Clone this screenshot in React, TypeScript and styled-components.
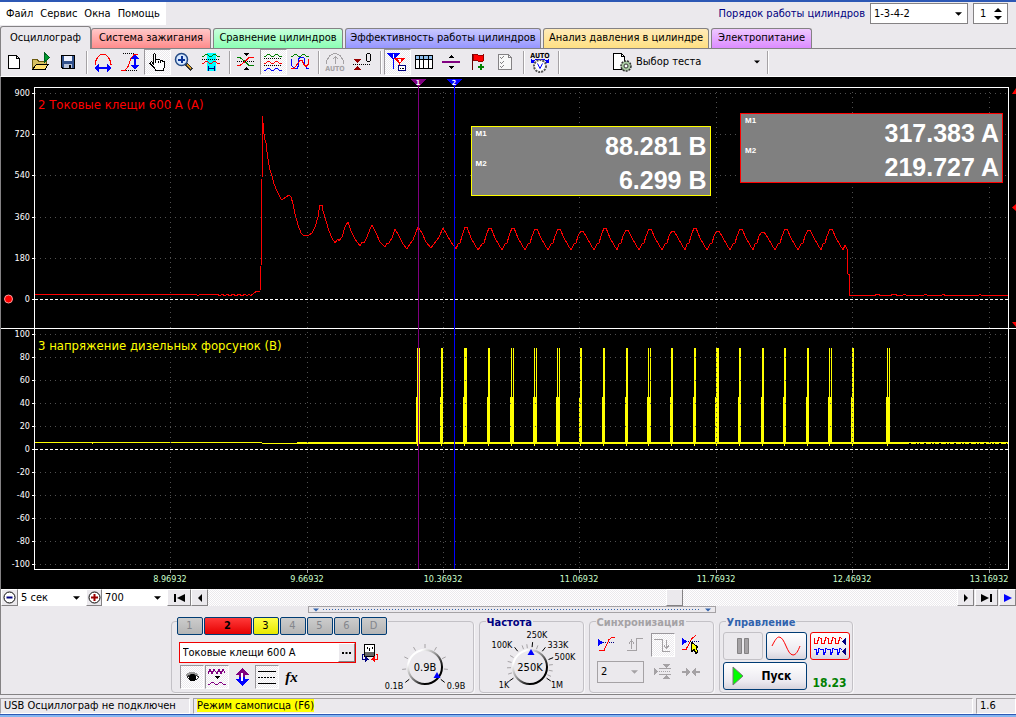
import React from "react";
import styled, { createGlobalStyle, css } from "styled-components";

const FACE = "#ebe9ed";
const LINE = "#848284";
const CHECKER = "repeating-conic-gradient(#ebe9ed 0% 25%, #ffffff 0% 50%) 0 0 / 2px 2px";

const GlobalStyle = createGlobalStyle`
  * { box-sizing: border-box; }
  body {
    margin: 0;
    background: ${FACE};
    font-family: "DejaVu Sans Condensed", "DejaVu Sans", sans-serif;
    font-size: 11px;
    line-height: 14px;
    color: #000;
  }
  button, input, select { font: inherit; color: inherit; border-radius: 0; }
  button { background: none; border: 0; padding: 0; margin: 0; }
`;

/* ---------- window frame ---------- */

const Window = styled.div`
  display: flex;
  flex-direction: column;
  border-top: 2px solid #2d58b5;
`;

const Header = styled.header`
  display: flex;
  justify-content: space-between;
  align-items: flex-start;
  height: 24px;
`;

const MenuBar = styled.nav`
  display: flex;
  align-items: center;
  gap: 7px;
  height: 23px;
  padding: 0 6px;
  background: #fff;
`;

const OrderBar = styled.div`
  display: flex;
  align-items: center;
  gap: 5px;
  padding: 1px 8px 0 0;
`;

const OrderLabel = styled.label`
  color: #000080;
`;

const SelectWrap = styled.span<{ $w: number }>`
  position: relative;
  display: block;
  width: ${(p) => p.$w}px;
  svg {
    position: absolute;
    right: 6px;
    top: 50%;
    margin-top: -2px;
    pointer-events: none;
  }
`;

const Select = styled.select<{ $h: number; $plain?: boolean; $off?: boolean }>`
  appearance: none;
  display: block;
  width: 100%;
  height: ${(p) => p.$h}px;
  padding: 0 0 0 3px;
  background: ${(p) => (p.$off ? FACE : "#fff")};
  border: ${(p) => (p.$plain ? "0" : p.$off ? "1px solid #a5a2a5" : "1px solid " + LINE)};
  opacity: 1;
  color: #000;
`;

const SpinBox = styled.span`
  display: flex;
  align-items: center;
  width: 35px;
  height: 21px;
  background: #fff;
  border: 1px solid ${LINE};
  input {
    width: 20px;
    padding: 0 0 0 6px;
    border: 0;
    background: transparent;
  }
`;

/* ---------- tabs ---------- */

const Tabs = styled.div`
  display: flex;
  align-items: flex-end;
  height: 23px;
  border-bottom: 1px solid ${LINE};
`;

const Tab = styled.button<{ $w: number; $from?: string; $to?: string }>`
  width: ${(p) => p.$w}px;
  height: ${(p) => (p.$from ? 20 : 22)}px;
  margin-right: ${(p) => (p.$from ? 2 : 0)}px;
  padding-bottom: 1px;
  border: 1px solid ${LINE};
  border-bottom: 0;
  border-radius: 3px 3px 0 0;
  white-space: nowrap;
  background: ${(p) => (p.$from ? `linear-gradient(${p.$from}, ${p.$to})` : FACE)};
  ${(p) =>
    !p.$from &&
    css`
      height: 23px;
      margin-bottom: -1px;
      position: relative;
    `}
`;

/* ---------- toolbar ---------- */

const Toolbar = styled.div`
  display: flex;
  align-items: center;
  height: 28px;
  padding: 0 0 1px;
  border-bottom: 1px solid #fff;
  border-left: 1px solid ${LINE};
`;

const Tool = styled.button<{ $on?: boolean }>`
  display: flex;
  align-items: center;
  justify-content: center;
  width: 27px;
  height: 26px;
  padding-right: 1px;
  ${(p) =>
    p.$on &&
    css`
      background: ${CHECKER};
      border: 1px solid;
      border-color: #9a979c #fff #fff #9a979c;
    `}
`;

const Separator = styled.span`
  width: 2px;
  height: 23px;
  margin: 0 2px 0 4px;
  border-left: 1px solid #a5a2a5;
  border-right: 1px solid #fff;
`;

const TestPicker = styled.button`
  display: flex;
  align-items: center;
  gap: 4px;
  width: 201px;
  height: 26px;
  padding: 0 3px 0 50px;
  span { flex: 1; text-align: left; }
`;

/* ---------- chart ---------- */

const ChartArea = styled.main`
  position: relative;
  background: #000;
  border-left: 1px solid ${LINE};
  > svg { display: block; width: 100%; height: auto; }
`;

const Readout = styled.section<{ $c: string; $w: number; $top: number; $right: string }>`
  position: absolute;
  top: ${(p) => p.$top}px;
  right: ${(p) => p.$right};
  width: ${(p) => p.$w}px;
  height: 70px;
  display: flex;
  justify-content: space-between;
  padding: 2px 3px 0 4px;
  background: #808080;
  border: 1px solid ${(p) => p.$c};
  color: #fff;
  font-weight: bold;
  font-family: "Liberation Sans", Arial, sans-serif;
`;

const Marks = styled.div`
  font-size: 8px;
  line-height: 10px;
  display: flex;
  flex-direction: column;
  gap: 20px;
`;

const Values = styled.div`
  font-size: 25px;
  line-height: 34px;
  text-align: right;
`;

/* ---------- scroll row ---------- */

const ScrollRow = styled.div`
  display: flex;
  align-items: stretch;
  height: 17px;
  border-left: 1px solid ${LINE};
`;

const Raised = styled.button<{ $w: number }>`
  display: flex;
  align-items: center;
  justify-content: center;
  flex: none;
  width: ${(p) => p.$w}px;
  background: ${FACE};
  border: 1px solid;
  border-color: #fff ${LINE} ${LINE} #fff;
`;

const Track = styled.div`
  flex: 1;
  display: flex;
  justify-content: flex-end;
  padding-right: 27%;
  background: ${CHECKER};
`;

const Gap = styled.span`
  width: 1px;
`;

const SplitterRow = styled.div`
  display: flex;
  justify-content: center;
  padding-left: 6px;
  height: 6px;
  border-left: 1px solid ${LINE};
`;

const Splitter = styled.button`
  display: flex;
  align-items: center;
  justify-content: space-between;
  width: 408px;
  height: 7px;
  padding: 0 4px;
  border: 1px solid #a5a2a5;
  i {
    flex: 1;
    height: 1px;
    margin: 0 4px;
    background: repeating-linear-gradient(90deg, #3163ad 0 1px, transparent 1px 3px);
  }
`;

/* ---------- control panel ---------- */

const Panel = styled.section`
  display: flex;
  justify-content: center;
  gap: 5px;
  height: 82px;
  padding: 5px 0 0 6px;
  border-left: 1px solid ${LINE};
`;

const groupFrame = css`
  border: 1px solid #c3c1c6;
  border-radius: 4px;
  box-shadow: 1px 1px 0 #f7f6f8;
`;

const ChannelGroup = styled.section`
  display: flex;
  width: 303px;
  height: 72px;
  margin-top: 4px;
  ${groupFrame}
`;

const ChannelSide = styled.div`
  width: 216px;
  margin-top: -5px;
  padding-left: 5px;
`;

const Channels = styled.div`
  display: flex;
  gap: 1px;
  background: ${FACE};
`;

const Channel = styled.button<{ $tone?: "red" | "yellow" }>`
  width: ${(p) => (p.$tone === "red" ? 48 : 26)}px;
  height: 18px;
  border: 1px solid #003c74;
  border-radius: 2px;
  color: ${(p) => (p.$tone ? "#000" : "#84868c")};
  font-weight: ${(p) => (p.$tone === "red" ? "bold" : "normal")};
  background: ${(p) =>
    p.$tone === "red"
      ? "linear-gradient(#ff3a3a, #e60000)"
      : p.$tone === "yellow"
        ? "linear-gradient(#ffff4a, #e8e800)"
        : "linear-gradient(#cccccc, #b4b4b4)"};
`;

const FieldRow = styled.div`
  display: flex;
  align-items: center;
  gap: 5px;
  padding: 7px 0 2px 2px;
`;

const Field = styled.div`
  display: flex;
  width: 177px;
  height: 21px;
  background: #fff;
  border: 1px solid #f00000;
  input {
    flex: 1;
    min-width: 0;
    padding: 0 0 0 3px;
    border: 0;
    background: transparent;
  }
`;

const Icons = styled.div`
  display: flex;
  gap: 1px;
  padding-left: 3px;
`;

const SmallTool = styled.button<{ $on?: boolean }>`
  display: flex;
  align-items: center;
  justify-content: center;
  width: 24px;
  height: 24px;
  border: 1px solid transparent;
  ${(p) =>
    p.$on &&
    css`
      background: ${CHECKER};
      border-color: #9a979c #fff #fff #9a979c;
    `}
`;

const Formula = styled.em`
  font-family: "Liberation Serif", serif;
  font-size: 15px;
  font-weight: bold;
`;

const Group = styled.fieldset<{ $w: number }>`
  width: ${(p) => p.$w}px;
  height: 76px;
  min-width: 0;
  margin: 0;
  padding: 0;
  ${groupFrame}
`;

const Legend = styled.legend<{ $c: string }>`
  height: 8px;
  margin-left: 6px;
  padding: 0 1px;
  line-height: 12px;
  font-weight: bold;
  color: ${(p) => p.$c};
`;

const Dial = styled.div<{ $w: number; $h: number }>`
  position: relative;
  width: ${(p) => p.$w}px;
  height: ${(p) => p.$h}px;
  svg { display: block; overflow: visible; }
  input {
    position: absolute;
    inset: 14px 24px;
    width: 48px;
    margin: 0;
    opacity: 0;
  }
`;

const SyncGrid = styled.div`
  display: grid;
  grid-template-columns: repeat(4, 28px);
  grid-template-rows: 24px 30px;
  align-items: center;
  justify-content: center;
  padding-top: 8px;
`;

const SyncSelect = styled.div`
  grid-column: span 2;
  padding-left: 2px;
`;

const RunGrid = styled.div`
  display: grid;
  grid-template-columns: 40px 41px 40px;
  grid-template-rows: 28px 28px;
  column-gap: 3px;
  row-gap: 2px;
  padding: 7px 0 0 3px;
`;

const RunButton = styled.button<{ $c: string; $wide?: boolean }>`
  display: flex;
  align-items: center;
  justify-content: center;
  border: 1px solid ${(p) => p.$c};
  border-radius: 3px;
  background: linear-gradient(#ffffff, #eceaf0 70%, #d6d3dc);
  font-weight: bold;
  font-size: 12px;
  ${(p) =>
    p.$wide &&
    css`
      grid-column: span 2;
      justify-content: flex-start;
      gap: 18px;
      padding-left: 8px;
    `}
  &:disabled { background: ${FACE}; }
`;

const Voltage = styled.output`
  align-self: end;
  justify-self: center;
  color: #008000;
  font-size: 12px;
  line-height: 14px;
  font-weight: bold;
`;

/* ---------- status bar ---------- */

const StatusBar = styled.footer`
  display: flex;
  gap: 3px;
  height: 20px;
  padding: 3px 0 0;
  border-top: 1px solid ${LINE};
`;

const DesktopEdge = styled.div`
  height: 3px;
  border-top: 1px solid #2d58b5;
  background: #84b6f0;
`;

const StatusCell = styled.div<{ $w?: number }>`
  flex: ${(p) => (p.$w ? "none" : "1")};
  width: ${(p) => (p.$w ? p.$w + "px" : "auto")};
  padding-left: 3px;
  border: 1px solid;
  border-color: #a5a2a5 #fff #fff #a5a2a5;
  white-space: nowrap;
  mark { background: #ffff00; color: #000; }
`;

/* ---------- small drawings ---------- */

const Down = ({ c = "#000", w = 7 }: { c?: string; w?: number }) => (
  <svg width={w} height="4" viewBox="0 0 8 4"><path d="M0 0h8L4 4z" fill={c} /></svg>
);

type IconProps = { children: React.ReactNode; w?: number; h?: number };
const Ico = ({ children, w = 20, h = 20 }: IconProps) => (
  <svg width={w} height={h} viewBox={`0 0 ${w} ${h}`} fill="none" stroke="#000" shapeRendering="crispEdges">{children}</svg>
);

/* A two-crest pixel wave whose troughs lie on row y. */
const Wave = ({ y, c }: { y: number; c: string }) => (
  <path
    d={`M1 ${y}.500h2M8 ${y}.500h3M16 ${y}.500h3M3 ${y - 1}.500h1M7 ${y - 1}.500h1M11 ${y - 1}.500h1M15 ${y - 1}.500h1M4 ${y - 2}.500h3M12 ${y - 2}.500h3`}
    stroke={c}
  />
);

const NewIcon = () => (
  <Ico><path d="M4.500 3.500h8l3 3v10h-11zM12.500 3.500v3h3" fill="#fff" /></Ico>
);
const OpenIcon = () => (
  <Ico>
    <path d="M1.500 17.500v-10h5l1 2h8v3" fill="#d8c060" stroke="#6b5a10" />
    <path d="M1.500 17.500l4-5.500h12l-3.500 5.500z" fill="#ffe070" stroke="#000" />
    <path d="M13.500 1v9l5-4.500z" fill="#009a30" stroke="#006020" />
  </Ico>
);
const SaveIcon = () => (
  <Ico>
    <path d="M3.500 3.500h13v13h-11.500l-1.500-1.500z" fill="#31518c" />
    <path d="M6 4h8v5H6z" fill="#eef2ff" stroke="none" />
    <path d="M6 12h8v4H6z" fill="#b8c4dc" stroke="none" /><path d="M11 12.500h2v3h-2z" fill="#000" stroke="none" />
  </Ico>
);
const PeriodIcon = () => (
  <Ico>
    <path d="M1.500 12.500h1v-3l2-4 3-3h5l3 3 2 4v3h1" stroke="#f00" />
    <path d="M3 16h14" stroke="#00f" strokeWidth="2" />
    <path d="M1 16l5-4v8zM19 16l-5-4v8z" fill="#00f" stroke="none" />
  </Ico>
);
const SwingIcon = () => (
  <Ico>
    <path d="M1 18.500h4l3-4 3-8 3-4h4" stroke="#f00" />
    <path d="M3 1.500h12M6 18.500h12" strokeDasharray="1 1" />
    <path d="M15 4v12" stroke="#00f" strokeWidth="2" />
    <path d="M15 2l-4 5h8zM15 18l-4-5h8z" fill="#00f" stroke="none" />
  </Ico>
);
const HandIcon = () => (
  <Ico>
    <path d="M6.500 13V2.500q1.500-1.500 2 0v5q2-1 2.500 .5q2-1 2.500 .5q2-.5 2.500 1q1.500 0 1.500 1.500v4l-1.500 3.500h-7l-2-3-4-4q0-2 2-1.500z" fill="#fff" />
    <path d="M8.500 8v3M11.500 8.500V11M13.500 9v2" />
  </Ico>
);
const ZoomIcon = () => (
  <Ico>
    <path d="M12 12l6 6" stroke="#333" strokeWidth="4" /><path d="M13 12.500l4 4" stroke="#e0a020" strokeWidth="2" />
    <circle cx="7.500" cy="7.500" r="6" fill="#d6e8ff" stroke="#244a84" strokeWidth="1.500" shapeRendering="auto" />
    <path d="M7 4h2v7H7zM4 7h7v2H4z" fill="#0a3296" stroke="none" />
  </Ico>
);
const BandIcon = () => (
  <Ico>
    <path d="M6 1h9v18H6z" fill="#0ff" stroke="none" />
    <Wave y={4} c="#008000" />
    <path d="M1 7.500h18" strokeDasharray="1 1" />
    <Wave y={11} c="#f00" />
    <path d="M7 16.500h7M7.500 14v5M13.500 14v5" stroke="#000080" />
  </Ico>
);
const CrossIcon = () => (
  <Ico>
    <path d="M1 5.500h3l4 3 5 5h5" stroke="#008000" /><path d="M1 13.500h3l4-3 5-5h5" stroke="#f00" />
    <path d="M1 9.500h18" strokeDasharray="1 1" />
    <path d="M7 1h6l-3 3zM7 18h6l-3-3z" fill="#000" stroke="none" />
  </Ico>
);
const StackIcon = () => (
  <Ico>
    <Wave y={4} c="#008000" />
    <Wave y={11} c="#f00" />
    <Wave y={18} c="#00f" />
    <path d="M1 6.500h18M1 13.500h18" strokeDasharray="1 1" />
  </Ico>
);
const OverlayIcon = () => (
  <Ico>
    <Wave y={4} c="#008000" />
    <path d="M1.500 7v6l2 3h4l1-3v-6l2-2h3l1 2v6l2 3h2" stroke="#00f" />
    <path d="M1 16.500h3l3-4 3-4h2l2 4 2 2 2-2V7" stroke="#f00" />
  </Ico>
);
const AutoIcon = () => (
  <Ico>
    <path d="M1.500 12v-3l3-5 4-2.500h3l4 2.500 3 5v3M10.500 12V4M7.500 7.500l3-3 3 3" stroke="#a5a2a5" />
    <text x="10" y="19" textAnchor="middle" fontSize="7" fontWeight="bold" fill="#a5a2a5" stroke="none">AUTO</text>
  </Ico>
);
const ZeroIcon = () => (
  <Ico>
    <path d="M1 12.500h18" strokeDasharray="1 1" />
    <path d="M2 7h7l-3.500 4zM2 18h7l-3.500-4z" fill="#900" stroke="none" />
    <rect x="14.500" y="1.500" width="4" height="8" rx="2" />
  </Ico>
);
const MarkersIcon = () => (
  <Ico>
    <path d="M0 1h13L7 8v9H6V8z" fill="#00f" stroke="none" />
    <path d="M7 6h11l-5 6v5h-1v-5z" fill="#f00" stroke="none" />
    <path d="M6.500 2v4M11 7.500h2v1h-1v1h2" stroke="#fff" />
    <path d="M11.500 13.500h7v5h-7z" fill="#fff" stroke="#000080" /><path d="M13 16.500h1M15 16.500h2" />
  </Ico>
);
const TableIcon = () => (
  <Ico>
    <path d="M1.500 3.500h17v13h-17z" fill="#fff" /><path d="M2 4h16v3H2z" fill="#8fc0ee" stroke="none" />
    <path d="M1.500 7.500h17M5.500 4v13M9.500 4v13M14.500 4v13" />
  </Ico>
);
const SplitIcon = () => (
  <Ico>
    <path d="M1 10h18" stroke="#800080" strokeWidth="2" />
    <path d="M7 6h6l-3-3zM7 14h6l-3 3z" fill="#000" stroke="none" />
  </Ico>
);
const FlagIcon = () => (
  <Ico>
    <path d="M4.500 2v16" stroke="#600" />
    <path d="M5 3q3-2 5 0t5 0v6q-2 2-5 0t-5 0z" fill="#f00" stroke="#900" />
    <path d="M13 12v6M10 15h6" stroke="#008000" strokeWidth="2" />
  </Ico>
);
const ChecklistIcon = () => (
  <Ico>
    <path d="M3.500 2.500h10l3 3v12h-13z" fill="#f8f8f8" stroke="#848284" /><path d="M13.500 2.500v3h3" stroke="#848284" />
    <path d="M5.500 5.500l1 1 2-2M5.500 10.500l1 1 2-2M5.500 14.500l1 1 2-2" stroke="#848284" />
  </Ico>
);
const AutoClockIcon = () => (
  <Ico h={24}>
    <text x="10" y="8" textAnchor="middle" fontSize="7" fontWeight="bold" fill="#000" stroke="none">AUTO</text>
    <path d="M3 11q7-4 14 0" stroke="#00f" /><path d="M1 9v4h5zM19 9v4h-5z" fill="#00f" stroke="none" />
    <circle cx="10" cy="16" r="6" fill="#fff" stroke="#555" strokeWidth="2" strokeDasharray="2 1" shapeRendering="auto" />
    <path d="M7.500 13.500l2.500 5 2.500-5" stroke="#00f" shapeRendering="auto" />
  </Ico>
);
const DocGearIcon = () => (
  <Ico>
    <path d="M1.500 1.500h8l3 3v13h-11z" fill="#fff" /><path d="M9.500 1.500v3h3" />
    <circle cx="14" cy="14" r="5" fill="#a8c8a0" stroke="#333" strokeWidth="1.500" strokeDasharray="2 1" shapeRendering="auto" />
    <circle cx="14" cy="14" r="2" fill="#fff" stroke="#333" shapeRendering="auto" />
  </Ico>
);

/* ---------- chart data ---------- */

const ONSET =
  "M35 294.500H196l2 1 2-1H217l3 1 2-1 3 1 2-1 3 1 3-1 3 1 3-1 3 1 3-1 2 1 2-1 2 1L257 291 260 291 261 267 262 180 262.500 116 " +
  "263 123 264 134 265 140 266 143 267 152 268 159 270 170 272 176 274 184 277 191 281 199 283 199 286 197 289 195 291 197 " +
  "293 204 295 214 298 225 301 233 303 235 306 236 309 235 312 233 315 227 318 217 319 210 320 205 322 205 323 211 326 221 " +
  "329 231 332 238 335 243 338 239 339 241 342 237 345 227 348 222 351 231 355 239 360 246 362 242 364 243 367 237 370 229 " +
  "372 225 376 233 380 242 385 247 387 243 389 243 392 238 395 229 399 236 403 244 407 249 410 244 413 240 416 232 418 227 " +
  "422 233 426 242 431 248 434 244 439 237 443 228 447 235 451 242 456 249";
const PEAKS: [number, number][] = [
  [466, 227], [490, 228], [513, 228], [536, 229], [559, 229], [582, 231], [605, 228], [627, 230], [650, 229],
  [673, 231], [695, 228], [718, 231], [741, 229], [763, 232], [786, 229], [809, 230], [831, 229],
];
const ripple = PEAKS.map(([x, y]) =>
  `L${x - 8} 244l2-1L${x - 4} 236L${x - 1} ${y}h2L${x + 5} 238l4 7L${x + 12} 250`).join("");
const CURRENT = `${ONSET}${ripple}l2-5 2 4 1 25h1v21.500h26l1-1h3l1 1h11l1-1h4l1 1h5l2-1 4 1h15l2-1 4 1h12l2-1 3 1h32l2-1 2 1H1008`;

type Spike = { low: number; lowW: number; tops: [number, number][] };
const SPIKES: Spike[] = [
  { low: 416, lowW: 4, tops: [[417, 3]] }, { low: 440, lowW: 3, tops: [[441, 2]] },
  { low: 463, lowW: 4, tops: [[464, 3]] }, { low: 487, lowW: 3, tops: [[488, 2]] },
  { low: 510, lowW: 4, tops: [[511, 1], [513, 1]] }, { low: 533, lowW: 4, tops: [[534, 1], [536, 1]] },
  { low: 556, lowW: 4, tops: [[557, 1], [559, 1]] }, { low: 579, lowW: 3, tops: [[580, 2]] },
  { low: 602, lowW: 3, tops: [[603, 2]] }, { low: 625, lowW: 3, tops: [[626, 2]] },
  { low: 647, lowW: 4, tops: [[648, 1], [650, 1]] }, { low: 670, lowW: 3, tops: [[671, 2]] },
  { low: 693, lowW: 3, tops: [[694, 2]] }, { low: 715, lowW: 4, tops: [[716, 3]] },
  { low: 738, lowW: 3, tops: [[739, 2]] }, { low: 761, lowW: 3, tops: [[762, 2]] },
  { low: 783, lowW: 3, tops: [[784, 2]] }, { low: 806, lowW: 3, tops: [[807, 2]] },
  { low: 828, lowW: 4, tops: [[829, 1], [831, 1]] }, { low: 851, lowW: 3, tops: [[852, 2]] },
  { low: 886, lowW: 4, tops: [[887, 1], [889, 1]] },
];

const UPPER: [string, number][] = [["900", 93], ["720", 134], ["540", 175], ["360", 217], ["180", 258], ["0", 299]];
const LOWER: [string, number][] = [100, 80, 60, 40, 20, 0, -20, -40, -60, -80, -100].map(
  (v, i) => [String(v), 334 + i * 23],
);
const TIMES: [string, number][] = [
  ["8.96932", 170], ["9.66932", 307], ["10.36932", 443], ["11.06932", 579], ["11.76932", 716], ["12.46932", 852], ["13.16932", 989],
];

const Chart = () => (
  <svg viewBox="1 77 1015 512" role="img" aria-label="Осциллограмма">
    <g fill="#ff0" shapeRendering="crispEdges">
      <path d="M35 442h227v1H35zM262 443h35v1h-35zM92 443h1v1h-1zM297 442h612v2H297zM909 442h99v1h-99z" />
      {SPIKES.map((s) => (
        <g key={s.low}>
          <rect x={s.low} y={397} width={s.lowW} height={47} />
          <rect x={s.low + 1} y={444} width={1} height={2} />
          {s.tops.map(([x, w]) => <rect key={x} x={x} y={348} width={w} height={50} />)}
        </g>
      ))}
    </g>
    <path d="M890 443.500h118" stroke="#ff0" strokeDasharray="4 2 5 1 2 1" shapeRendering="crispEdges" />
    <path d={CURRENT} fill="none" stroke="#f00" shapeRendering="crispEdges" />
    <g stroke="#505050" strokeDasharray="1 4" shapeRendering="crispEdges">
      {[...UPPER, ...LOWER].filter(([t]) => t !== "0").map(([t, y]) => <path key={t} d={`M35 ${y}.500H1008`} />)}
      {TIMES.map(([t, x]) => <path key={t} d={`M${x}.500 92V569`} />)}
    </g>
    <g stroke="#fff" shapeRendering="crispEdges">
      <path d="M35 299.500H1008M35 449.500H1008" strokeDasharray="3 2" />
      <path d="M34.500 569.500V87.500H1008.500V569.500zM1 328.500H1016" fill="none" />
      {[...UPPER, ...LOWER].map(([t, y]) => <path key={t + y} d={`M32 ${y}.500h3`} />)}
    </g>
    <g stroke="#999" shapeRendering="crispEdges">
      {TIMES.map(([t, x]) => <path key={t} d={`M${x}.500 570v3`} />)}
    </g>
    <g fill="#fff" fontSize="9" textAnchor="end">
      {[...UPPER, ...LOWER].map(([t, y]) => <text key={t + y} x="30" y={y + 3}>{t}</text>)}
    </g>
    <g fill="#ccffcc" fontSize="9" textAnchor="middle">
      {TIMES.map(([t, x]) => <text key={t} x={x} y="582">{t}</text>)}
    </g>
    <text x="38" y="109" fontSize="13" fill="#f00">2 Токовые клещи 600 А (А)</text>
    <text x="38" y="350" fontSize="13" fill="#ff0">3 напряжение дизельных форсунок (В)</text>
    <g shapeRendering="crispEdges">
      <path d="M418.500 82V569" stroke="#800080" /><path d="M454.500 82V569" stroke="#00f" />
      <path d="M411 79h15l-7.500 8z" fill="#800080" /><path d="M447 79h15l-7.500 8z" fill="#00f" />
    </g>
    <g fill="#fff" fontSize="7" fontWeight="bold" textAnchor="middle">
      <text x="418" y="85">1</text><text x="454" y="85">2</text>
    </g>
    <circle cx="8.500" cy="299" r="4" fill="#f00" stroke="#ff9c9c" />
    <path d="M1012 94l4-6v6zM1012 207.500l4-3.500v7zM1012 322h4v5z" fill="#f00" />
  </svg>
);

/* ---------- dials ---------- */

type Mark = { t: string; x: number; y: number };
type DialProps = { label: string; w: number; h: number; cx: number; cy: number; value: string; px: number; py: number; marks: Mark[]; ticks: number[]; strong: number[] };
const ray = (cx: number, cy: number, deg: number, a: number, b: number) => {
  const r = (deg * Math.PI) / 180;
  return `M${cx + a * Math.sin(r)} ${cy - a * Math.cos(r)}L${cx + b * Math.sin(r)} ${cy - b * Math.cos(r)}`;
};
const DialControl = ({ label, w, h, cx, cy, value, px, py, marks, ticks, strong }: DialProps) => (
  <Dial $w={w} $h={h}>
    <svg width={w} height={h} viewBox={`0 0 ${w} ${h}`}>
      <defs>
        <linearGradient id={"rim" + w} x1="0" y1="0" x2="1" y2="1">
          <stop offset="0.200" stopColor="#fff" /><stop offset="0.450" stopColor="#999" /><stop offset="0.750" stopColor="#000" />
        </linearGradient>
      </defs>
      <path d={ticks.map((d) => ray(cx, cy, d, 19, 23)).join("")} stroke="#a5a2a5" />
      <path d={strong.map((d) => ray(cx, cy, d, 20, 25)).join("")} stroke="#000" />
      <circle cx={cx} cy={cy} r="17" fill="#ebe9ed" stroke={`url(#rim${w})`} strokeWidth="2" />
      <path d={`M${px} ${py - 3}l3.500 6h-7z`} fill="#00f" />
      <text x={cx} y={cy + 4} fontSize="11" textAnchor="middle">{value}</text>
      {marks.map((m) => <text key={m.t} x={m.x} y={m.y} fontSize="9" textAnchor="middle">{m.t}</text>)}
    </svg>
    <input type="range" aria-label={label} />
  </Dial>
);

const TOOLS: { name: string; icon: React.ReactNode; on?: boolean }[][] = [
  [{ name: "Новый", icon: <NewIcon /> }, { name: "Открыть", icon: <OpenIcon /> }, { name: "Сохранить", icon: <SaveIcon /> }],
  [
    { name: "Период", icon: <PeriodIcon /> }, { name: "Размах", icon: <SwingIcon /> },
    { name: "Рука", icon: <HandIcon />, on: true }, { name: "Лупа", icon: <ZoomIcon /> }, { name: "Диапазон", icon: <BandIcon /> },
  ],
  [{ name: "Центр", icon: <CrossIcon /> }, { name: "Раздельно", icon: <StackIcon />, on: true }, { name: "Совместно", icon: <OverlayIcon /> }],
  [{ name: "Авто", icon: <AutoIcon /> }, { name: "Ноль", icon: <ZeroIcon /> }],
  [
    { name: "Маркеры", icon: <MarkersIcon />, on: true }, { name: "Таблица", icon: <TableIcon /> },
    { name: "Разделить", icon: <SplitIcon /> }, { name: "Флаг", icon: <FlagIcon /> }, { name: "Список", icon: <ChecklistIcon /> },
  ],
  [{ name: "Автонастройка", icon: <AutoClockIcon /> }],
];

export default function App() {
  return (
    <>
      <GlobalStyle />
      <Window>
        <Header>
          <MenuBar>
            {["Файл", "Сервис", "Окна", "Помощь"].map((m) => <button key={m}>{m}</button>)}
          </MenuBar>
          <OrderBar>
            <OrderLabel htmlFor="order">Порядок работы цилиндров</OrderLabel>
            <SelectWrap $w={98}>
              <Select id="order" $h={21}><option>1-3-4-2</option></Select>
              <Down />
            </SelectWrap>
            <SpinBox>
              <input aria-label="Цилиндр" defaultValue="1" />
              <svg width="8" height="14" viewBox="0 0 8 14"><path d="M0 5h8L4 1zM0 9h8l-4 4z" /></svg>
            </SpinBox>
          </OrderBar>
        </Header>

        <Tabs role="tablist">
          <Tab $w={91} role="tab" aria-selected>Осциллограф</Tab>
          <Tab $w={120} $from="#ffc8c8" $to="#ff8c8c" role="tab">Система зажигания</Tab>
          <Tab $w={130} $from="#c8ffdc" $to="#8cffb4" role="tab">Сравнение цилиндров</Tab>
          <Tab $w={196} $from="#c8c8ff" $to="#9696ff" role="tab">Эффективность работы цилиндров</Tab>
          <Tab $w={166} $from="#ffebb9" $to="#ffe082" role="tab">Анализ давления в цилиндре</Tab>
          <Tab $w={101} $from="#eec8ff" $to="#dc8cff" role="tab">Электропитание</Tab>
        </Tabs>

        <Toolbar>
          {TOOLS.map((group, i) => (
            <React.Fragment key={i}>
              {group.map((t) => <Tool key={t.name} $on={t.on} aria-label={t.name}>{t.icon}</Tool>)}
              <Separator />
            </React.Fragment>
          ))}
          <TestPicker><DocGearIcon /><span>Выбор теста</span><Down w={6} /></TestPicker>
          <Separator />
        </Toolbar>

        <ChartArea>
          <Chart />
          <Readout $c="#ffff00" $w={240} $top={49} $right="30.1%">
            <Marks><span>M1</span><span>M2</span></Marks>
            <Values><div>88.281 В</div><div>6.299 В</div></Values>
          </Readout>
          <Readout $c="#ff0000" $w={263} $top={36} $right="13px">
            <Marks><span>M1</span><span>M2</span></Marks>
            <Values><div>317.383 A</div><div>219.727 A</div></Values>
          </Readout>
        </ChartArea>

        <ScrollRow>
          <Raised $w={17} aria-label="Сжать">
            <svg width="13" height="13" viewBox="0 0 13 13"><circle cx="6.500" cy="6.500" r="5.500" fill="#fff" stroke="#000" /><path d="M3.500 6.500h6" stroke="#000080" strokeWidth="2" /></svg>
          </Raised>
          <SelectWrap $w={68}>
            <Select aria-label="Длительность" $h={17} $plain><option>5 сек</option></Select>
            <Down />
          </SelectWrap>
          <Raised $w={16} aria-label="Растянуть">
            <svg width="13" height="13" viewBox="0 0 13 13"><circle cx="6.500" cy="6.500" r="5.500" fill="#fff" stroke="#000" /><path d="M3 6.500h7M6.500 3v7" stroke="#900" strokeWidth="2" /></svg>
          </Raised>
          <SelectWrap $w={65}>
            <Select aria-label="Масштаб" $h={17} $plain><option>700</option></Select>
            <Down />
          </SelectWrap>
          <Raised $w={24} aria-label="В начало">
            <svg width="11" height="8" viewBox="0 0 11 8"><path d="M0 0h2v8H0zM11 0v8L3 4z" /></svg>
          </Raised>
          <Raised $w={17} aria-label="Назад">
            <svg width="4" height="8" viewBox="0 0 4 8"><path d="M4 0v8L0 4z" /></svg>
          </Raised>
          <Track><Raised $w={17} aria-label="Позиция" /></Track>
          <Raised $w={17} aria-label="Вперёд">
            <svg width="4" height="8" viewBox="0 0 4 8"><path d="M0 0v8l4-4z" /></svg>
          </Raised>
          <Gap />
          <Raised $w={23} aria-label="В конец">
            <svg width="11" height="8" viewBox="0 0 11 8"><path d="M9 0h2v8H9zM0 0v8l8-4z" /></svg>
          </Raised>
          <Gap />
          <Raised $w={17} aria-label="Воспроизвести">
            <svg width="8" height="8" viewBox="0 0 8 8"><path d="M0 0v8l8-4z" fill="#00f" /></svg>
          </Raised>
        </ScrollRow>

        <SplitterRow>
          <Splitter aria-label="Свернуть панель"><Down c="#3163ad" w={6} /><i /><Down c="#3163ad" w={6} /></Splitter>
        </SplitterRow>

        <Panel>
          <ChannelGroup>
            <ChannelSide>
              <Channels>
                <Channel>1</Channel><Channel $tone="red">2</Channel><Channel $tone="yellow">3</Channel>
                <Channel>4</Channel><Channel>5</Channel><Channel>6</Channel><Channel>D</Channel>
              </Channels>
              <FieldRow>
                <Field>
                  <input aria-label="Датчик канала" defaultValue="Токовые клещи 600 А" />
                  <Raised $w={17} aria-label="Выбрать датчик">
                    <svg width="9" height="2" viewBox="0 0 9 2"><path d="M0 0h2v2H0zM3.500 0h2v2h-2zM7 0h2v2H7z" /></svg>
                  </Raised>
                </Field>
                <Ico w={18} h={18}>
                  <path d="M3.500 .5h10v12h-10z" fill="#fff" /><path d="M4 8h9v4H4z" fill="#666" stroke="none" />
                  <path d="M6.500 3v2M8.500 4v3M11.500 3v2" />
                  <path d="M3 10.500H1.500v5h4" stroke="#000080" /><path d="M4 12l4 3.500-4 2.500z" fill="#000080" stroke="none" />
                  <path d="M14.500 10.500h2v5h-4" stroke="#f00" /><path d="M14 12l-4 3.500 4 2.500z" fill="#f00" stroke="none" />
                </Ico>
              </FieldRow>
              <Icons>
                <SmallTool $on aria-label="Показать">
                  <Ico w={18} h={14}>
                    <path d="M3 4q6-4 12 0v2H3z" fill="#999" stroke="none" />
                    <path d="M4 7q5-5 12 0q-6 7-12 0z" fill="#fff" stroke="#333" /><circle cx="9.500" cy="7.500" r="3" fill="#000" />
                  </Ico>
                </SmallTool>
                <SmallTool $on aria-label="Фильтр">
                  <Ico>
                    <path d="M1 6.500l2-4 2 4 2-4 3 4 2-4 2 4 2-4 2 3" stroke="#800080" />
                    <path d="M7 9h6l-3 3z" fill="#000" stroke="none" />
                    <Wave y={17} c="#800080" />
                  </Ico>
                </SmallTool>
                <SmallTool aria-label="Инвертировать">
                  <Ico>
                    <path d="M10 1l7 7h-4v2H7V8H3z" fill="#800080" stroke="none" />
                    <path d="M10 19l7-7h-4v-2H7v2H3z" fill="#00f" stroke="none" /><path d="M10 6v8" stroke="#fff" strokeWidth="2" />
                  </Ico>
                </SmallTool>
                <SmallTool $on aria-label="Линии">
                  <Ico><path d="M1 4.500h18M1 16.500h18" /><path d="M1 10.500h18" strokeDasharray="2 1" /></Ico>
                </SmallTool>
                <SmallTool aria-label="Функция"><Formula>fx</Formula></SmallTool>
              </Icons>
            </ChannelSide>
            <DialControl
              label="Чувствительность" w={84} h={70} cx={37} cy={45} value="0.9В" px={49} py={53}
              marks={[{ t: "0.1В", x: 6, y: 67 }, { t: "0.9В", x: 68, y: 67 }]}
              ticks={[-96, -64, -30, 0, 30, 64, 96]} strong={[-128, 128]}
            />
          </ChannelGroup>

          <Group $w={105}>
            <Legend $c="#000080">Частота</Legend>
            <DialControl
              label="Частота" w={103} h={67} cx={50} cy={42} value="250K" px={51} py={27}
              marks={[
                { t: "250K", x: 57, y: 13 }, { t: "100K", x: 22, y: 23 }, { t: "333K", x: 78, y: 23 },
                { t: "500K", x: 85, y: 35 }, { t: "1K", x: 24, y: 63 }, { t: "1M", x: 77, y: 63 },
              ]}
              ticks={[-108, -92, -76, -60, -20, -8, 20, 84, 100, 114]} strong={[-124, -38, 6, 38, 68, 124]}
            />
          </Group>

          <Group $w={125}>
            <Legend $c="#a5a2a5">Синхронизация</Legend>
            <SyncGrid>
              <SmallTool aria-label="Уровень">
                <Ico>
                  <path d="M2 7.500h16" stroke="#000080" strokeDasharray="1 1" /><path d="M1 4v7l5-3.500z" fill="#00f" stroke="none" />
                  <path d="M2 15.500h5l5-11 3-2h3" stroke="#f00" />
                </Ico>
              </SmallTool>
              <SmallTool aria-label="Фронт" disabled>
                <Ico><path d="M2 15.500h9v-12h7M6.500 14V6M4 8.500L6.500 5 9 8.500" stroke="#a5a2a5" /></Ico>
              </SmallTool>
              <SmallTool $on aria-label="Спад" disabled>
                <Ico><path d="M1 4.500h8v12h8M13.500 5v8M11 10.500l2.500 3 2.500-3" stroke="#a5a2a5" /></Ico>
              </SmallTool>
              <SmallTool aria-label="Захват">
                <Ico>
                  <path d="M1 6.500h18" stroke="#000080" strokeDasharray="1 1" /><path d="M1 3v7l5-3.500z" fill="#00f" stroke="none" />
                  <path d="M1 14.500h4l6-11 4-3" stroke="#f00" />
                  <path d="M10 7l7 5-2 1 2 4-2 1.500-2-4-2 2z" fill="#ff0" />
                </Ico>
              </SmallTool>
              <SyncSelect>
                <SelectWrap $w={47}>
                  <Select aria-label="Канал синхронизации" $h={22} $off><option>2</option></Select>
                  <Down c="#a5a2a5" />
                </SelectWrap>
              </SyncSelect>
              <SmallTool aria-label="Порог" disabled>
                <Ico>
                  <path d="M1 6v7l4-3.500zM10 2h7l-3.500 4zM10 17h7l-3.500-4z" fill="#a5a2a5" stroke="none" />
                  <path d="M6 6.500h12M6 12.500h12" stroke="#a5a2a5" /><path d="M6 9.500h12" stroke="#a5a2a5" strokeDasharray="1 1" />
                </Ico>
              </SmallTool>
              <SmallTool aria-label="Совместить" disabled>
                <Ico><path d="M1 9h4V5.500l5 4.500-5 4.500V11H1zM19 9h-4V5.500L10 10l5 4.500V11h4z" fill="#a5a2a5" stroke="none" /></Ico>
              </SmallTool>
            </SyncGrid>
          </Group>

          <Group $w={134}>
            <Legend $c="#3163ad">Управление</Legend>
            <RunGrid>
              <RunButton $c="#c3c1c6" disabled aria-label="Пауза">
                <svg width="12" height="16" viewBox="0 0 12 16"><path d="M.5 .5h4v15h-4zM7.500 .5h4v15h-4z" fill="#a5a2a5" stroke="#848284" /></svg>
              </RunButton>
              <RunButton $c="#003c74" aria-label="Осциллограф">
                <svg width="30" height="20" viewBox="0 0 30 20" fill="none" stroke="#f00"><path d="M1 10C4 4 6 1 8 1C14 1 16 19 22 19C25 19 27 15 29 10" /></svg>
              </RunButton>
              <RunButton $c="#f00000" aria-label="Самописец">
                <svg width="34" height="20" viewBox="0 0 34 20" fill="none" shapeRendering="crispEdges">
                  <path d={"M1 2.500" + "l1 5h2l1-3 1-3 2 1".repeat(4)} stroke="#f00" />
                  <path d={"M1 13.500" + "h2l1 5 1-2 1-4 2 1".repeat(4)} stroke="#00f" />
                  <path d="M33 2v7l-4-3.500zM33 12v7l-4-3.500z" fill="#000080" />
                </svg>
              </RunButton>
              <RunButton $c="#003c74" $wide>
                <svg width="12" height="20" viewBox="0 0 12 20"><path d="M1 1v18l10-9z" fill="#0f0" stroke="#777" /></svg>
                Пуск
              </RunButton>
              <Voltage>18.23</Voltage>
            </RunGrid>
          </Group>
        </Panel>

        <StatusBar>
          <StatusCell $w={190}>USB Осциллограф не подключен</StatusCell>
          <StatusCell><mark>Режим самописца (F6)</mark></StatusCell>
          <StatusCell $w={40}>1.6</StatusCell>
        </StatusBar>
        <DesktopEdge />
      </Window>
    </>
  );
}
